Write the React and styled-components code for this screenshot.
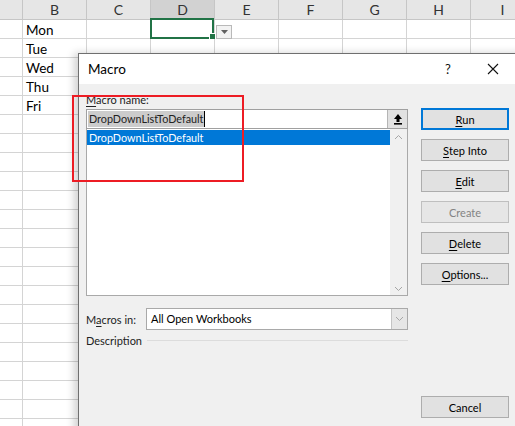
import React from "react";
import styled, { createGlobalStyle } from "styled-components";

const GlobalStyle = createGlobalStyle`
  html, body {
    margin: 0;
    padding: 0;
    background: #ffffff;
    overflow: hidden;
  }
`;

const Page = styled.div`
  position: relative;
  width: 515px;
  height: 426px;
  overflow: hidden;
  background: #ffffff;
  font-family: Lato, "Open Sans", sans-serif;
`;

// ---------- spreadsheet ----------
const Sheet = styled.div`
  display: flex;
  flex-direction: column;
  font-family: Lato, "Liberation Sans", sans-serif;
`;

const HeaderRow = styled.div`
  display: flex;
  height: 20px;
  background: #e6e6e6;
  border-bottom: 1px solid #c6c6c6;
  box-sizing: border-box;
`;

const HeaderCell = styled.div`
  flex: 0 0 ${(p) => p.w}px;
  box-sizing: border-box;
  border-right: 1px solid #c6c6c6;
  background: ${(p) => (p.active ? "#d2d2d2" : "transparent")};
  color: #333;
  font-size: 14px;
  line-height: 19px;
  text-align: center;
`;

const Row = styled.div`
  display: flex;
  height: 19px;
  box-sizing: border-box;
  border-bottom: 1px solid #d4d4d4;
`;

const Cell = styled.div`
  position: relative;
  flex: 0 0 ${(p) => p.w}px;
  box-sizing: border-box;
  border-right: 1px solid #d4d4d4;
  font-size: 13.5px;
  line-height: 17px;
  padding: 2px 0 0 3px;
  color: #000;
`;

const SelectBox = styled.div`
  position: absolute;
  left: -1px;
  top: -2px;
  width: 64px;
  height: 21px;
  box-sizing: border-box;
  border: 2px solid #217346;
`;

const FillHandle = styled.div`
  position: absolute;
  right: -4px;
  bottom: -3px;
  width: 5px;
  height: 5px;
  background: #217346;
  border: 1px solid #fff;
`;

const CellDrop = styled.div`
  position: absolute;
  left: 65px;
  top: 5px;
  width: 16px;
  height: 14px;
  box-sizing: border-box;
  border: 1px solid #b9b9b9;
  background: #f2f2f2;
  display: flex;
  align-items: center;
  justify-content: center;
`;

// ---------- dialog ----------
const Dialog = styled.div`
  position: absolute;
  left: 78px;
  top: 53px;
  width: 460px;
  height: 390px;
  box-sizing: border-box;
  border: 1px solid #6f6f6f;
  background: #f0f0f0;
  box-shadow: -4px 0 8px rgba(0, 0, 0, 0.18);
  display: flex;
  flex-direction: column;
  font-size: 11px;
  color: #000;
`;

const TitleBar = styled.div`
  height: 30px;
  background: #ffffff;
  display: flex;
  align-items: center;
  padding: 0 21px 0 9px;
`;

const Title = styled.div`
  flex: 1;
  font-size: 13.5px;
`;

const TitleButton = styled.div`
  width: ${(p) => p.w}px;
  display: flex;
  justify-content: center;
  align-items: center;
  font-size: 13px;
  color: #111;
`;

const Body = styled.div`
  display: flex;
  padding-left: 7px;
  gap: 13px;
`;

const LeftCol = styled.div`
  width: 322px;
  display: flex;
  flex-direction: column;
`;

const Label = styled.div`
  margin-top: 8px;
  height: 17px;
  line-height: 16px;
  color: #222;
`;

const U = styled.span`
  text-decoration: underline;
  text-underline-offset: 2px;
`;

const NameInput = styled.div`
  display: flex;
  height: 20px;
  box-sizing: border-box;
  border: 1px solid #a0a0a0;
  background: #fff;
`;

const InputText = styled.div`
  flex: 1;
  padding: 1px 0 0 1px;
  line-height: 16px;
  font-size: 10.8px;
  white-space: nowrap;
`;

const Highlight = styled.span`
  display: inline-block;
  background: #cccccc;
  color: #222;
  line-height: 16px;
  padding: 0 1px;
  box-shadow: 1px 0 0 #000;
`;

const InputButton = styled.div`
  width: 19px;
  background: #e1e1e1;
  border-left: 1px solid #b5b5b5;
  display: flex;
  align-items: center;
  justify-content: center;
`;

const List = styled.div`
  display: flex;
  height: 167px;
  box-sizing: border-box;
  border: 1px solid #a9a9a9;
  border-top: none;
  background: #fff;
`;

const ListItems = styled.div`
  flex: 1;
  padding-top: 1px;
`;

const ListItem = styled.div`
  height: 15px;
  line-height: 15px;
  padding-left: 2px;
  font-size: 10.8px;
  background: ${(p) => (p.selected ? "#0078d7" : "transparent")};
  color: ${(p) => (p.selected ? "#fff" : "#000")};
`;

const ScrollBar = styled.div`
  width: 17px;
  background: #f0f0f0;
  display: flex;
  flex-direction: column;
  justify-content: space-between;
  align-items: center;
  padding: 5px 0 3px;
`;

const MacrosRow = styled.div`
  display: flex;
  align-items: center;
  margin-top: 12px;
  height: 22px;
`;

const RowLabel = styled.div`
  width: 60px;
  color: #222;
`;

const Select = styled.div`
  flex: 1;
  display: flex;
  height: 22px;
  box-sizing: border-box;
  border: 1px solid #a9a9a9;
  background: #fff;
`;

const SelectText = styled.div`
  flex: 1;
  padding-left: 4px;
  line-height: 20px;
`;

const SelectArrow = styled.div`
  width: 15px;
  background: #e6e6e6;
  border-left: 1px solid #c4c4c4;
  display: flex;
  align-items: center;
  justify-content: center;
`;

const DescRow = styled.div`
  display: flex;
  align-items: center;
  height: 20px;
  gap: 5px;
  color: #222;
`;

const Rule = styled.div`
  flex: 1;
  height: 1px;
  background: #dcdcdc;
`;

const RightCol = styled.div`
  width: 88px;
  display: flex;
  flex-direction: column;
  padding-top: 24px;
  gap: 9px;
`;

const Button = styled.div`
  height: 22px;
  box-sizing: border-box;
  border: 1px solid ${(p) => (p.primary ? "#0078d7" : p.disabled ? "#bfbfbf" : "#adadad")};
  box-shadow: ${(p) => (p.primary ? "inset 0 0 0 1px #0078d7" : "none")};
  background: ${(p) => (p.disabled ? "#e6e6e6" : "#e1e1e1")};
  color: ${(p) => (p.disabled ? "#838383" : "#000")};
  display: flex;
  align-items: center;
  justify-content: center;
  margin-top: ${(p) => p.mt || 0}px;
`;

const RedFrame = styled.div`
  position: absolute;
  left: 72px;
  top: 95px;
  width: 172px;
  height: 87px;
  box-sizing: border-box;
  border: 2px solid #ed1c24;
`;

const columns = [
  { id: "", w: 23 },
  { id: "B", w: 64 },
  { id: "C", w: 64 },
  { id: "D", w: 64 },
  { id: "E", w: 64 },
  { id: "F", w: 64 },
  { id: "G", w: 64 },
  { id: "H", w: 64 },
  { id: "I", w: 64 },
];

const days = ["Mon", "Tue", "Wed", "Thu", "Fri"];

const Chevron = ({ up }) => (
  <svg width="9" height="6" viewBox="0 0 9 6">
    <path
      d={up ? "M1 5 L4.5 1.5 L8 5" : "M1 1 L4.5 4.5 L8 1"}
      fill="none"
      stroke="#a6a6a6"
      strokeWidth="1"
    />
  </svg>
);

const App = () => {
  const rows = Array.from({ length: 22 }, (_, i) => i);
  return (
    <>
      <GlobalStyle />
      <Page>
        <Sheet>
          <HeaderRow>
            {columns.map((c) => (
              <HeaderCell key={c.id || "a"} w={c.w} active={c.id === "D"}>
                {c.id}
              </HeaderCell>
            ))}
          </HeaderRow>
          {rows.map((r) => (
            <Row key={r}>
              {columns.map((c) => (
                <Cell key={c.id || "a"} w={c.w}>
                  {c.id === "B" && days[r]}
                  {c.id === "D" && r === 0 && (
                    <>
                      <SelectBox>
                        <FillHandle />
                      </SelectBox>
                      <CellDrop>
                        <svg width="7" height="4" viewBox="0 0 7 4">
                          <path d="M0 0 H7 L3.5 4 Z" fill="#606060" />
                        </svg>
                      </CellDrop>
                    </>
                  )}
                </Cell>
              ))}
            </Row>
          ))}
        </Sheet>

        <Dialog>
          <TitleBar>
            <Title>Macro</Title>
            <TitleButton w={44}>?</TitleButton>
            <TitleButton w={46}>
              <svg width="12" height="12" viewBox="0 0 12 12">
                <path d="M1 1 L11 11 M11 1 L1 11" stroke="#111" strokeWidth="1.1" />
              </svg>
            </TitleButton>
          </TitleBar>
          <Body>
            <LeftCol>
              <Label>
                <U>M</U>acro name:
              </Label>
              <NameInput>
                <InputText>
                  <Highlight>DropDownListToDefault</Highlight>
                </InputText>
                <InputButton>
                  <svg width="10" height="12" viewBox="0 0 10 12">
                    <path d="M5 1 L9 6 H6.5 V9 H3.5 V6 H1 Z" fill="#000" />
                    <rect x="1" y="10" width="8" height="1.6" fill="#000" />
                  </svg>
                </InputButton>
              </NameInput>
              <List>
                <ListItems>
                  <ListItem selected>DropDownListToDefault</ListItem>
                </ListItems>
                <ScrollBar>
                  <Chevron up />
                  <Chevron />
                </ScrollBar>
              </List>
              <MacrosRow>
                <RowLabel>
                  M<U>a</U>cros in:
                </RowLabel>
                <Select>
                  <SelectText>All Open Workbooks</SelectText>
                  <SelectArrow>
                    <Chevron />
                  </SelectArrow>
                </Select>
              </MacrosRow>
              <DescRow>
                Description
                <Rule />
              </DescRow>
            </LeftCol>
            <RightCol>
              <Button primary>
                <U>R</U>un
              </Button>
              <Button>
                <U>S</U>tep Into
              </Button>
              <Button>
                <U>E</U>dit
              </Button>
              <Button disabled>Create</Button>
              <Button>
                <U>D</U>elete
              </Button>
              <Button>
                <U>O</U>ptions...
              </Button>
              <Button mt={102}>Cancel</Button>
            </RightCol>
          </Body>
        </Dialog>

        <RedFrame />
      </Page>
    </>
  );
};

export default App;
